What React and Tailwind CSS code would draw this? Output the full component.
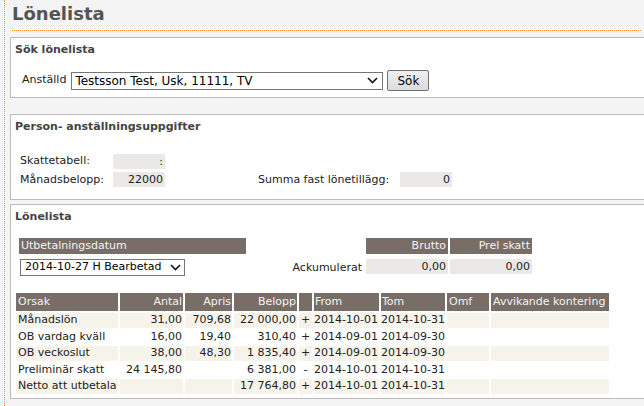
import React from 'react'

const HEAD = 'bg-[#786e67] text-[#f4f4f4]'

const rows = [
  { orsak: 'Månadslön', antal: '31,00', apris: '709,68', belopp: '22 000,00', sign: '+', from: '2014-10-01', tom: '2014-10-31' },
  { orsak: 'OB vardag kväll', antal: '16,00', apris: '19,40', belopp: '310,40', sign: '+', from: '2014-09-01', tom: '2014-09-30' },
  { orsak: 'OB veckoslut', antal: '38,00', apris: '48,30', belopp: '1 835,40', sign: '+', from: '2014-09-01', tom: '2014-09-30' },
  { orsak: 'Preliminär skatt', antal: '24 145,80', apris: '', belopp: '6 381,00', sign: '-', from: '2014-10-01', tom: '2014-10-31' },
  { orsak: 'Netto att utbetala', antal: '', apris: '', belopp: '17 764,80', sign: '+', from: '2014-10-01', tom: '2014-10-31' },
]

function Chevron() {
  return (
    <svg width="11" height="7" viewBox="0 0 11 7" className="shrink-0">
      <path d="M1 1l4.5 4.5L10 1" fill="none" stroke="#111" strokeWidth="1.6" />
    </svg>
  )
}

function Panel({ title, className, children }) {
  return (
    <div className={`ml-[5px] w-[700px] bg-white border border-[#bcbcbc] ${className}`}>
      <div className="pl-[4px] pt-[5px] font-bold text-[#444] h-[20px] leading-[14px]">{title}</div>
      {children}
    </div>
  )
}

function ValueBox({ children, w = 'w-[52px]' }) {
  return (
    <div className={`${w} h-[15px] bg-[#ebe8e8] text-right pr-[2px] leading-[15px]`}>{children}</div>
  )
}

export default function App() {
  return (
    <div className="h-[406px] w-[644px] overflow-hidden bg-[#f4f4f4] text-[11px] text-[#222] whitespace-nowrap" style={{ fontFamily: '"DejaVu Sans", Verdana, sans-serif' }}>
      <div className="ml-[4px] h-full border-l border-dotted border-[#f7941d]">
        <div className="ml-[7px] mr-[3px] h-[31px] border-b border-dotted border-[#f7941d] pt-[2px] text-[18px] font-bold leading-[24px] text-[#555]">
          Lönelista
        </div>

        <Panel title="Sök lönelista" className="mt-[6px] h-[61px]">
          <div className="flex items-center pl-[11px] mt-[12px]">
            <span>Anställd</span>
            <div className="ml-[5px] flex h-[18px] w-[312px] items-center justify-between border border-[#767676] pl-[3px] pr-[4px] text-[12px] text-black">
              <span>Testsson Test, Usk, 11111, TV</span>
              <Chevron />
            </div>
            <div className="ml-[4px] flex h-[21px] w-[42px] items-center justify-center rounded-[2px] border border-[#707070] bg-gradient-to-b from-[#f0f0f0] to-[#dcdcdc] text-[12px] text-black">
              Sök
            </div>
          </div>
        </Panel>

        <Panel title="Person- anställningsuppgifter" className="mt-[16px] h-[86px]">
          <div className="mt-[18px] pl-[9px] flex flex-col gap-[2px]">
            <div className="flex items-center">
              <span className="w-[93px]">Skattetabell:</span>
              <ValueBox>:</ValueBox>
            </div>
            <div className="flex items-center">
              <span className="w-[93px]">Månadsbelopp:</span>
              <ValueBox>22000</ValueBox>
              <span className="ml-[93px] w-[142px]">Summa fast lönetillägg:</span>
              <ValueBox>0</ValueBox>
            </div>
          </div>
        </Panel>

        <Panel title="Lönelista" className="mt-[4px] h-[195px]">
          <div className="mt-[13px] flex">
            <div className="ml-[8px] w-[227px]">
              <div className={`${HEAD} h-[16px] pl-[2px] leading-[16px]`}>Utbetalningsdatum</div>
              <div className="ml-[1px] mt-[5px] flex h-[17px] w-[165px] items-center justify-between border border-[#767676] pl-[4px] pr-[3px] text-black">
                <span>2014-10-27 H Bearbetad</span>
                <Chevron />
              </div>
            </div>
            <div className="grid grid-cols-[118px_82px_82px] gap-x-[2px] gap-y-[3px]">
              <div />
              <div className={`${HEAD} h-[16px] pr-[2px] text-right leading-[16px]`}>Brutto</div>
              <div className={`${HEAD} h-[16px] pr-[2px] text-right leading-[16px]`}>Prel skatt</div>
              <div className="h-[15px] pr-[2px] text-right leading-[18px]">Ackumulerat</div>
              <ValueBox w="w-[82px]">0,00</ValueBox>
              <ValueBox w="w-[82px]">0,00</ValueBox>
            </div>
          </div>

          <table className="ml-[3px] mt-[15px] w-[597px] table-fixed border-separate border-spacing-[2px]">
            <colgroup>
              <col className="w-[102px]" />
              <col className="w-[63px]" />
              <col className="w-[47px]" />
              <col className="w-[63px]" />
              <col className="w-[13px]" />
              <col className="w-[65px]" />
              <col className="w-[64px]" />
              <col className="w-[42px]" />
              <col className="w-[118px]" />
            </colgroup>
            <thead>
              <tr className={`${HEAD} h-[18px]`}>
                <th className="p-0 pl-[2px] text-left font-normal">Orsak</th>
                <th className="p-0 pr-[1px] text-right font-normal">Antal</th>
                <th className="p-0 pr-[1px] text-right font-normal">Apris</th>
                <th className="p-0 pr-[1px] text-right font-normal">Belopp</th>
                <th className="p-0" />
                <th className="p-0 pl-[1px] text-left font-normal">From</th>
                <th className="p-0 pl-[1px] text-left font-normal">Tom</th>
                <th className="p-0 pl-[2px] text-left font-normal">Omf</th>
                <th className="p-0 pl-[2px] text-left font-normal">Avvikande kontering</th>
              </tr>
            </thead>
            <tbody>
              {rows.map((r, i) => {
                const bg = i % 2 === 0 ? 'bg-[#f6f3eb]' : ''
                return (
                  <tr key={i} className="h-[14.5px] leading-[14px]">
                    <td className={`${bg} p-0 pl-[2px]`}>{r.orsak}</td>
                    <td className={`${bg} p-0 pr-[1px] text-right`}>{r.antal}</td>
                    <td className={`${bg} p-0 pr-[1px] text-right`}>{r.apris}</td>
                    <td className={`${bg} p-0 pr-[1px] text-right`}>{r.belopp}</td>
                    <td className={`${bg} p-0 text-center`}>{r.sign}</td>
                    <td className={`${bg} p-0 text-left`}>{r.from}</td>
                    <td className={`${bg} p-0 text-left`}>{r.tom}</td>
                    <td className={`${bg} p-0`} />
                    <td className={`${bg} p-0`} />
                  </tr>
                )
              })}
            </tbody>
          </table>
        </Panel>
      </div>
    </div>
  )
}
